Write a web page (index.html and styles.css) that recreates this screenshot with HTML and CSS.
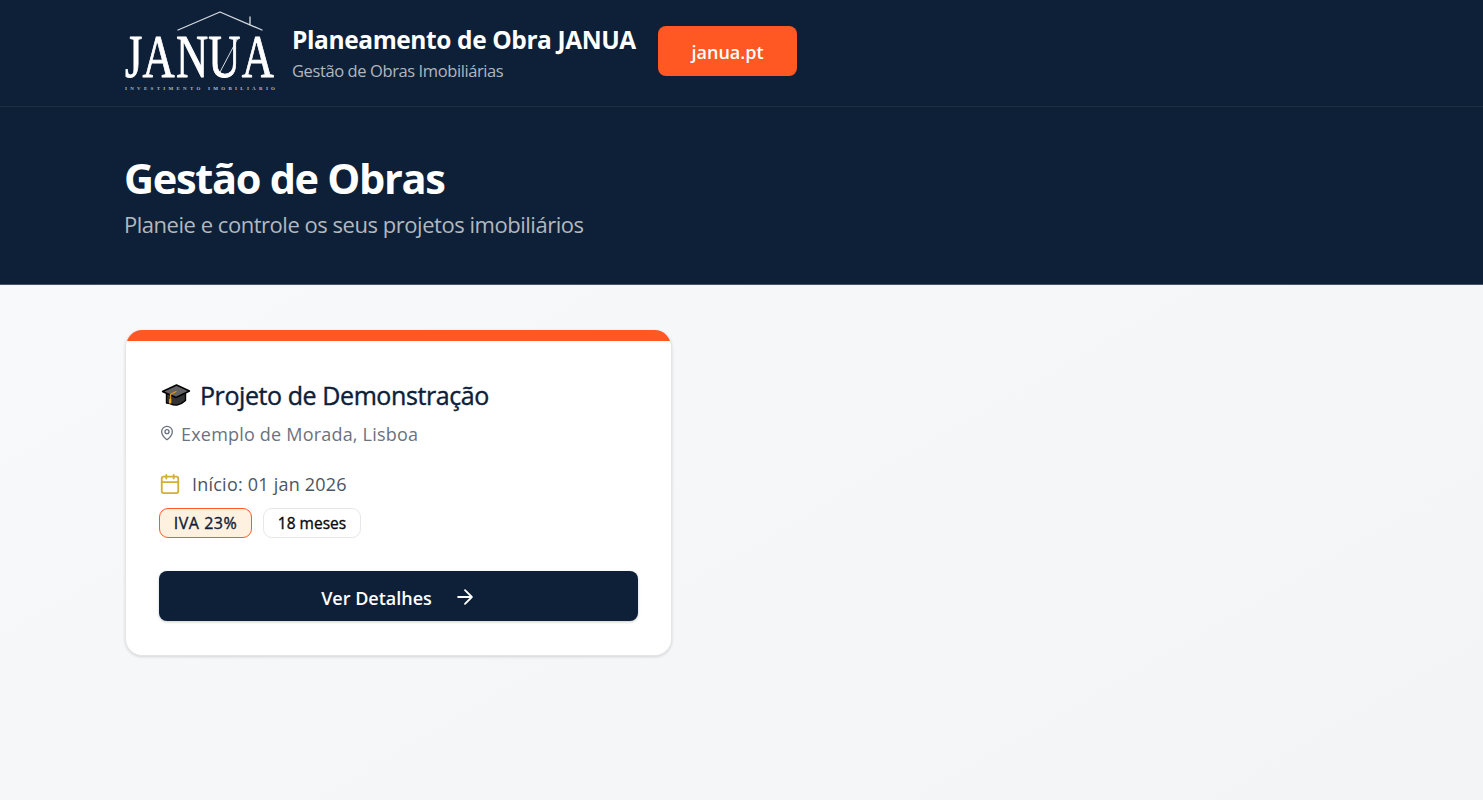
FILE: index.html
```html
<!DOCTYPE html>
<html lang="pt">
<head>
    <meta charset="UTF-8">
    <meta name="viewport" content="width=device-width, initial-scale=1.0">
    <title>Planeamento de Obra JANUA</title>
    <link rel="stylesheet" href="styles.css">
</head>
<body>
    <header class="topbar">
        <svg class="logo" width="152" height="84" viewBox="0 0 152 84">
            <path class="roof" d="M54 22 L96 4 L138 22 M126 17 V9" />
            <path class="slash" d="M95 66 L114 30" />
            <text class="logo-name" transform="translate(1 69) scale(0.73 1)" x="0 24 70 114 160">JANUA</text>
            <text class="logo-sub" x="1" y="82" textLength="150">INVESTIMENTO IMOBILIÁRIO</text>
        </svg>
        <div class="brand">
            <div class="brand-title">Planeamento de Obra JANUA</div>
            <div class="brand-sub">Gestão de Obras Imobiliárias</div>
        </div>
        <a class="site-link" href="#">janua.pt</a>
    </header>

    <section class="hero">
        <h1>Gestão de Obras</h1>
        <p>Planeie e controle os seus projetos imobiliários</p>
    </section>

    <main class="content">
        <div class="card">
            <div class="stripe"></div>
            <div class="card-body">
                <div class="card-title">
                    <svg width="30" height="24" viewBox="0 0 30 24">
                        <path d="M5.500 10 V20 L9 20.500 Q13 22.500 16 22 Q21 21 24.500 17.500 V10 Z" fill="#333" stroke="#000" stroke-width="1.400" />
                        <path d="M1.500 8.500 L15.500 2 L28.500 8 L15 14.500 Z" fill="#636363" stroke="#000" stroke-width="1.400" />
                        <path d="M15 8.500 L9.500 11.500 V17" stroke="#d99a10" stroke-width="1.300" />
                        <path d="M8.300 16 H10.300 V20.500 H7.800 Z" fill="#f0aa10" />
                    </svg>
                    <h2>Projeto de Demonstração</h2>
                </div>
                <div class="address">
                    <svg width="16" height="16" viewBox="0 0 24 24">
                        <path d="M20 10c0 4.993-5.539 10.193-7.399 11.799a1 1 0 0 1-1.202 0C9.539 20.193 4 14.993 4 10a8 8 0 0 1 16 0" />
                        <circle cx="12" cy="10" r="3" />
                    </svg>
                    <span>Exemplo de Morada, Lisboa</span>
                </div>
                <div class="start">
                    <svg width="22" height="22" viewBox="0 0 24 24">
                        <path d="M8 2v4M16 2v4M3 10h18" />
                        <rect x="3" y="4" width="18" height="18" rx="2" />
                    </svg>
                    <span>Início: 01 jan 2026</span>
                </div>
                <div class="badges">
                    <span class="badge iva">IVA 23%</span>
                    <span class="badge months">18 meses</span>
                </div>
                <button class="details" type="button">
                    <span>Ver Detalhes</span>
                    <svg width="22" height="22" viewBox="0 0 24 24">
                        <path d="M4.500 12h15M12 4.500l7.500 7.500-7.500 7.500" />
                    </svg>
                </button>
            </div>
        </div>
    </main>
</body>
</html>
```

FILE: styles.css
```css
* {
    box-sizing: border-box;
}
body {
    margin: 0;
    min-height: 800px;
    font-family: "Segoe UI", "Open Sans", "Noto Sans", sans-serif;
    background: linear-gradient(150deg, #f9fafc, #f3f4f6);
}
h1, h2, p {
    margin: 0;
}
svg {
    flex: none;
    fill: none;
    stroke-linecap: round;
    stroke-linejoin: round;
}
.topbar {
    display: flex;
    height: 107px;
    padding: 8px 124px 0;
    background: #0d2038;
    border-bottom: 1px solid #1e2c40;
    color: #fff;
}
.logo {
    overflow: visible;
}
.roof {
    stroke: #d5dae0;
    stroke-width: 1.3;
}
.slash {
    stroke: #d5dae0;
    stroke-width: 1;
}
.logo-name {
    fill: #fff;
    stroke: #fff;
    stroke-width: 0.9;
    font: 61px "Liberation Serif", serif;
}
.logo-sub {
    fill: #b4bcc6;
    font: bold 5px "Liberation Serif", serif;
}
.brand {
    margin-left: 16px;
    padding-top: 14px;
    width: 366px;
    white-space: nowrap;
}
.brand-title {
    font-size: 24.5px;
    line-height: 35px;
    font-weight: 700;
    letter-spacing: -0.4px;
}
.brand-sub {
    margin-top: 2px;
    font-size: 16.5px;
    line-height: 24px;
    letter-spacing: -0.4px;
    color: #b0b7bf;
}
.site-link {
    display: flex;
    align-items: center;
    justify-content: center;
    width: 139px;
    height: 50px;
    margin-top: 18px;
    padding-top: 1px;
    border-radius: 8px;
    background: #ff5822;
    color: #fff;
    font-size: 18px;
    font-weight: 600;
    text-decoration: none;
}
.hero {
    height: 178px;
    padding: 46px 124px 0;
    background: #0d2038;
    border-bottom: 1px solid #46536a;
}
.hero h1 {
    font-size: 41.5px;
    line-height: 50px;
    font-weight: 700;
    letter-spacing: -1.3px;
    color: #fff;
}
.hero p {
    margin-top: 5px;
    font-size: 22px;
    line-height: 32px;
    letter-spacing: -0.47px;
    color: #b3b8be;
}
.content {
    padding: 45px 125px 0;
}
.card {
    width: 547px;
    height: 326px;
    border: 1px solid #e4e5e7;
    border-top: 0;
    border-radius: 17px;
    overflow: hidden;
    background: #fff;
    box-shadow: 0 1px 3px rgba(0, 0, 0, 0.14);
}
.stripe {
    height: 11px;
    background: #ff5822;
}
.card-body {
    padding: 36px 33px 0;
}
.card-title {
    display: flex;
    align-items: center;
    gap: 9px;
    height: 36px;
    padding-left: 2px;
}
.card-title h2 {
    font-size: 25px;
    font-weight: 500;
    letter-spacing: -0.42px;
    color: #0d2038;
    -webkit-text-stroke: 0.4px #0d2038;
}
.address {
    display: flex;
    align-items: center;
    gap: 6px;
    height: 28px;
    margin-top: 7px;
    font-size: 18px;
    letter-spacing: 0.2px;
    color: #6b7280;
}
.address svg {
    margin-top: -2px;
    stroke: #6b7280;
    stroke-width: 2;
}
.start {
    display: flex;
    align-items: center;
    gap: 11px;
    height: 28px;
    margin-top: 22px;
    font-size: 18px;
    letter-spacing: 0.22px;
    color: #4b5563;
}
.start svg {
    stroke: #d4af37;
    stroke-width: 2;
}
.badges {
    display: flex;
    gap: 11px;
    margin-top: 10px;
}
.badge {
    display: flex;
    align-items: center;
    justify-content: center;
    height: 30px;
    border: 1px solid #e5e7eb;
    border-radius: 9px;
    font-size: 15.5px;
    font-weight: 500;
    color: #09090b;
    -webkit-text-stroke: 0.35px currentColor;
}
.iva {
    width: 93px;
    border-color: #ff5822;
    background: #fff1e0;
    color: #0d2038;
    font-size: 16px;
    letter-spacing: 0.5px;
}
.months {
    width: 98px;
}
.details {
    display: flex;
    align-items: center;
    justify-content: center;
    width: 479px;
    height: 50px;
    margin-top: 33px;
    padding: 2px 0 0;
    gap: 22px;
    border: 0;
    border-radius: 8px;
    background: #0d2038;
    box-shadow: 0 1px 3px rgba(0, 0, 0, 0.2);
    color: #fff;
    font-family: inherit;
    font-size: 18px;
    font-weight: 600;
}
.details span {
    padding-top: 2px;
}
.details svg {
    stroke: #fff;
    stroke-width: 2;
}
```
